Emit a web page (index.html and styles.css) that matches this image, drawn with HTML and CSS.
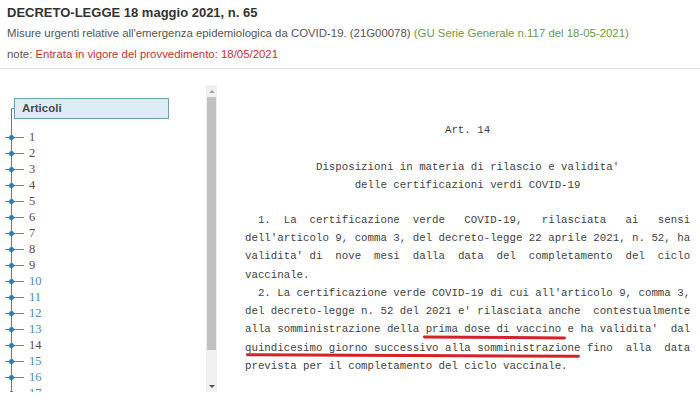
FILE: index.html
```html
<!DOCTYPE html>
<html lang="it">
<head>
<meta charset="utf-8">
<title>DECRETO-LEGGE 18 maggio 2021, n. 65</title>
<link rel="stylesheet" href="styles.css">
</head>
<body>
<header class="head">
  <div class="title">DECRETO-LEGGE 18 maggio 2021, n. 65</div>
  <div class="sub">Misure urgenti relative all'emergenza epidemiologica da COVID-19. (21G00078) <span class="gu">(GU Serie Generale n.117 del 18-05-2021)</span></div>
  <div class="note">note: <span class="red">Entrata in vigore del provvedimento: 18/05/2021</span></div>
</header>
<div class="main">
  <aside class="side">
    <div class="tree">
      <div class="tree-head"><span class="box">Articoli</span></div>
      <ul class="items">
        <li class="v">1</li>
        <li class="v">2</li>
        <li class="v">3</li>
        <li class="v">4</li>
        <li class="v">5</li>
        <li class="v">6</li>
        <li class="v">7</li>
        <li class="v">8</li>
        <li class="v">9</li>
        <li>10</li>
        <li>11</li>
        <li>12</li>
        <li>13</li>
        <li class="v">14</li>
        <li>15</li>
        <li>16</li>
        <li>17</li>
      </ul>
    </div>
    <div class="scrollbar">
      <div class="arrow up"></div>
      <div class="thumb"></div>
      <div class="track"></div>
      <div class="arrow down"></div>
    </div>
  </aside>
  <section class="art">
<pre class="heading">Art. 14

Disposizioni in materia di rilascio e validita'
delle certificazioni verdi COVID-19</pre>
<pre class="body">  1.  La  certificazione  verde   COVID-19,   rilasciata   ai   sensi
dell'articolo 9, comma 3, del decreto-legge 22 aprile 2021, n. 52, ha
validita' di  nove  mesi  dalla  data  del  completamento  del  ciclo
vaccinale.
  2. La certificazione verde COVID-19 di cui all'articolo 9, comma 3,
del decreto-legge n. 52 del 2021 e' rilasciata anche  contestualmente
alla somministrazione della <span class="mark m1">prima dose di vaccino</span> e ha validita'  dal
<span class="mark m2">quindicesimo giorno successivo alla somministrazione</span> fino  alla  data
prevista per il completamento del ciclo vaccinale.</pre>
  </section>
</div>
</body>
</html>
```
FILE: styles.css
```css
html, body {
  margin: 0;
  padding: 0;
  background: #ffffff;
}

body {
  width: 700px;
  height: 412px;
  overflow: hidden;
  font-family: "Liberation Sans", Arial, sans-serif;
  color: #444;
}

.head {
  padding: 2px 0 3px 7px;
  border-bottom: 1px solid #e2e2e2;
}

.title {
  font-size: 13px;
  font-weight: bold;
  color: #333;
  line-height: 21px;
}

.sub,
.note {
  font-size: 11.4px;
  line-height: 21px;
  color: #555;
}

.gu {
  color: #6a9a42;
}

.red {
  color: #c8302e;
}

.main {
  display: flex;
  align-items: flex-start;
}

.side {
  display: flex;
  margin-top: 16px;
  height: 307px;
  width: 217px;
  overflow: hidden;
}

.tree {
  position: relative;
  width: 206px;
  padding-top: 13px;
}

.tree::before {
  content: "";
  position: absolute;
  left: 10.5px;
  top: 23px;
  bottom: 0;
  width: 1.5px;
  background: #2a8db5;
}

.tree-head {
  position: relative;
  padding-left: 14px;
}

.tree-head::before {
  content: "";
  position: absolute;
  left: 11px;
  top: 10px;
  width: 3px;
  height: 1px;
  background: #6b9fb2;
}

.box {
  display: block;
  box-sizing: border-box;
  width: 155px;
  height: 21px;
  line-height: 19px;
  padding-left: 7px;
  background: #deedf5;
  border: 1px solid #6e9fb1;
  font-size: 11.5px;
  font-weight: bold;
  color: #4a4a4a;
}

.items {
  list-style: none;
  margin: 10px 0 0;
  padding: 0;
}

.items li {
  position: relative;
  height: 16px;
  line-height: 16px;
  padding-left: 29px;
  font-family: "Liberation Serif", "Times New Roman", serif;
  font-size: 12.5px;
  color: #4f87a8;
}

.items li.v {
  color: #6a4444;
}

.items li::before {
  content: "";
  position: absolute;
  left: 5px;
  top: 8px;
  width: 19px;
  height: 1px;
  background: #3a95ba;
}

.items li::after {
  content: "";
  position: absolute;
  left: 8.5px;
  top: 5.5px;
  width: 5px;
  height: 5px;
  border-radius: 50%;
  background: #1f84ae;
}

.scrollbar {
  width: 11px;
  display: flex;
  flex-direction: column;
  background: #f1f1f1;
}

.arrow {
  height: 12px;
  display: flex;
  align-items: center;
  justify-content: center;
}

.arrow::before {
  content: "";
  width: 0;
  height: 0;
  border-left: 3px solid transparent;
  border-right: 3px solid transparent;
}

.arrow.up::before {
  border-bottom: 3px solid #a3a3a3;
}

.arrow.down::before {
  border-top: 3px solid #505050;
}

.thumb {
  height: 253px;
  margin: 0 1px;
  background: #c1c1c1;
}

.track {
  flex: 1;
}

.art {
  margin-left: 28px;
  width: 450px;
}

.heading,
.body {
  margin: 0;
  font-family: "Liberation Mono", "DejaVu Sans Mono", monospace;
  font-size: 10.75px;
  line-height: 18.3px;
  color: #3f3f3f;
  white-space: pre;
}

.heading {
  margin-top: 52px;
  width: 69ch;
  text-align: center;
}

.body {
  margin-top: 16.5px;
}

.mark {
  position: relative;
}

.mark::after {
  content: "";
  position: absolute;
  height: 2.5px;
  border-radius: 2px;
  background: #d2222a;
}

.m1::after {
  left: -3px;
  right: -5px;
  bottom: -3px;
  transform: rotate(0.4deg);
}

.m2::after {
  left: 1px;
  right: 0;
  bottom: -3px;
  transform: rotate(0.3deg);
}
```
